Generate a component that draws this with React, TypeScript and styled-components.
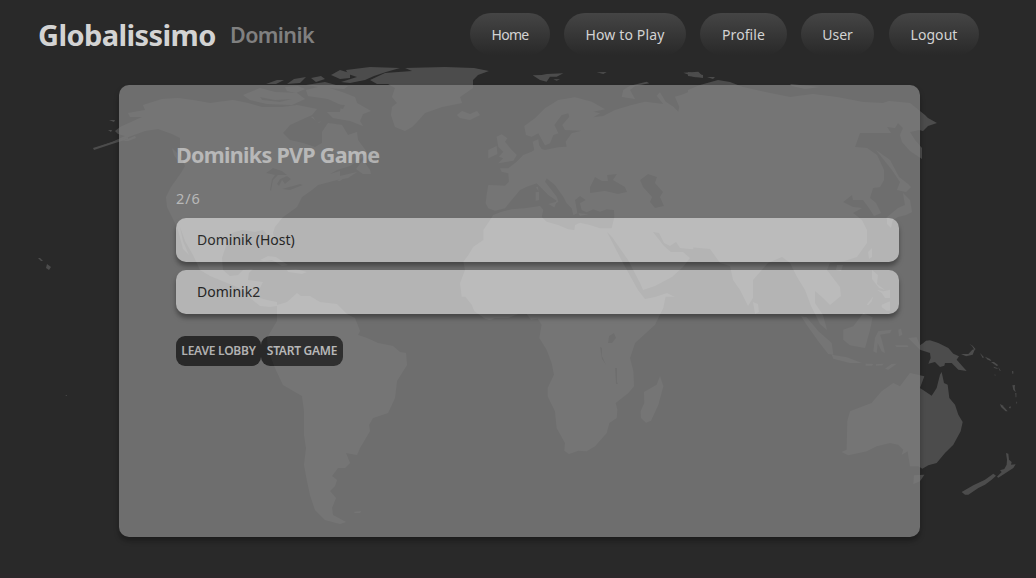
import React from "react";
import styled, { createGlobalStyle } from "styled-components";

const GlobalStyle = createGlobalStyle`
  * { box-sizing: border-box; }
  html, body { margin: 0; height: 100%; }
  body {
    background: #292929;
    color: lightgray;
    font-family: "Noto Sans", "Open Sans", sans-serif;
    font-size: 14px;
    font-weight: 400;
    overflow: hidden;
  }
`;

const Page = styled.div`
  position: relative;
  height: 578px;
  display: flex;
  flex-direction: column;
  overflow: hidden;
`;

const MapArt = styled.svg`
  position: absolute;
  inset: 0;
  width: 1036px;
  height: 578px;
`;

const Header = styled.header`
  position: relative;
  flex: none;
  height: 85px;
  padding: 13px 57px 0 38px;
  display: flex;
  justify-content: space-between;
  align-items: flex-start;
`;

const Brand = styled.div`
  display: flex;
  align-items: flex-start;
  gap: 14px;
  height: 42px;
  line-height: 44px;
  white-space: nowrap;
`;

const Title = styled.h1`
  margin: 0;
  width: 178px;
  font-size: 29px;
  font-weight: 700;
  letter-spacing: -0.6px;
`;

const PlayerName = styled.h2`
  margin: 0;
  font-size: 21.5px;
  font-weight: 600;
  color: #808080;
  letter-spacing: -0.6px;
`;

const Nav = styled.nav`
  display: flex;
  gap: 14px;
`;

const NavLink = styled.a<{ $width: number; $tracking: number }>`
  width: ${(p) => p.$width}px;
  height: 42px;
  border-radius: 21px;
  background: linear-gradient(#454545, #292929);
  display: flex;
  justify-content: center;
  line-height: 44px;
  letter-spacing: ${(p) => p.$tracking}px;
  white-space: nowrap;

  &:last-child { margin-left: 1px; }
`;

const Lobby = styled.main`
  position: relative;
  flex: none;
  width: 801px;
  height: 452px;
  margin-left: 119px;
  padding: 55px 21px 0 57px;
  border-radius: 10px;
  background: gray;
  opacity: 0.8;
  box-shadow: 0 4px 5px rgba(0, 0, 0, 0.35);
`;

const LobbyTitle = styled.h2`
  margin: 0;
  font-size: 21.5px;
  line-height: 30px;
  font-weight: 700;
  letter-spacing: -0.7px;
`;

const Count = styled.p`
  margin: 18px 0 10px;
  font-size: 14.5px;
  line-height: 20px;
  letter-spacing: 0.9px;
`;

const Player = styled.div`
  height: 44px;
  margin-bottom: 8px;
  padding-left: 21px;
  border-radius: 10px;
  background: #d7d7d7;
  color: #242424;
  line-height: 44px;
  box-shadow: 0 4px 5px rgba(0, 0, 0, 0.4);
`;

const Actions = styled.div`
  display: flex;
  margin-top: 22px;
`;

const Button = styled.button<{ $width: number }>`
  width: ${(p) => p.$width}px;
  height: 30px;
  padding: 0 0 1px;
  border: 0;
  border-radius: 9px;
  background: #292929;
  color: lightgray;
  font-family: inherit;
  font-size: 12px;
  font-weight: 600;
  letter-spacing: -0.25px;
  white-space: nowrap;
`;

const Footer = styled.footer`
  position: relative;
  flex: none;
  height: 4px;
  margin-top: auto;
  background: #2b282a;
`;

const land = "#4c4c4c";
const sea = "#292929";

const americas = [
  "93,149 112,142 125,136 118,134 115,131 120,127 142,117 130,117 128,113 145,110 143,105 162,99 178,98 193,100 210,103 233,100 248,103 262,107 283,107 297,105 317,109 312,115 303,119 290,125 283,133 290,140 303,143 315,147 322,143 322,132 328,123 342,125 348,135 357,132 358,140 367,152 363,157 350,166 337,170 330,174 340,171 340,176 357,172 348,178 337,180 318,185 312,190 302,197 297,207 283,217 275,227 273,233 276,245 273,247 270,238 263,230 255,232 242,230 232,233 227,243 222,258 223,270 230,276 238,275 243,270 253,269 249,273 248,280 263,282 260,288 260,298 267,300 277,302 277,306 270,307 260,306 250,298 245,292 237,287 227,283 210,276 200,270 193,255 185,241 180,227 183,241 189,255 183,249 177,227 172,217 167,207 166,197 171,187 181,173 185,166 180,155 180,138 172,134 158,129 145,131 120,140",
  "277,305 287,302 297,293 301,296 310,296 320,302 337,304 347,314 355,318 360,331 358,335 367,338 378,343 393,346 400,352 406,353 407,365 397,381 395,398 388,413 373,418 369,425 370,431 360,448 357,455 346,453 350,463 345,468 338,468 332,476 337,480 335,486 330,491 336,498 332,508 333,515 346,522 340,524 325,520 315,510 310,495 307,481 304,465 306,448 304,435 304,411 302,396 283,385 275,368 268,350 267,338 277,321",
  "243,95 260,88 275,92 297,93 305,99 292,105 267,104 250,100",
  "306,90 318,87 326,87 342,92 355,97 357,103 371,111 363,114 360,121 363,126 350,121 333,118 327,112 340,112 341,105 328,99 308,96",
  "311,117 318,115 323,119 319,123",
  "331,75 340,70 350,73 350,78 340,79",
  "346,70 370,67 400,68 386,72 374,76 365,80 350,83 341,82 357,77 348,74",
  "266,84 277,80 284,80 276,84",
  "287,84 294,79 306,77 300,83",
  "311,78 321,76 325,79 316,82",
  "306,85 325,82 336,85 348,86 344,89 325,88",
  "285,87 298,86 305,89 296,93 287,91",
  "370,80 385,73 412,71 405,68 445,67 474,68 489,71 478,75 473,80 473,88 460,97 462,103 442,107 425,113 417,122 412,127 405,131 395,127 391,115 392,107 397,103 392,97 395,88 388,84 377,84",
  "457,115 462,111 470,114 477,111 480,115 470,120 460,118",
  "356,169 363,160 370,170 371,174 363,174",
  "337,181 343,177 348,175 340,181",
  "260,260 268,256 276,257 288,265 282,266 272,260 264,261",
  "287,270 296,269 307,272 302,274 288,272",
  "47,264 51,267 49,270 46,268",
  "38,258 40,258 43,261 41,261",
  "109,120 115,120 114,122",
  "108,130 112,130 111,132",
  "93,148 112,142 128,137 128,139 112,144 94,150",
  "123,141 135,136 136,138 128,141",
  "172,148 177,153 178,161 174,155",
  "354,512 361,511 360,513 355,513",
  "65,395 67,395 67,396",
];

const eurasia = [
  "1045,270 1015,283 990,290 1003,320 1000,335 985,320 962,305 945,277 935,287 955,312 900,305 860,315 810,330 775,348 745,352 765,340 745,335 780,328 740,305 690,292 640,300 600,325 570,355 538,378 543,405 560,410 580,400 600,436 615,430 625,405 640,400 628,375 650,345 670,340 673,350 652,375 660,390 710,392 680,400 662,425 665,440 640,442 600,450 590,447 582,435 580,418 563,425 568,450 560,455 535,465 515,485 490,505 465,505 470,515 490,520 492,545 480,557 430,555 425,585 422,610 430,625 450,632 480,625 500,600 525,570 545,560 575,550 590,565 610,585 635,602 625,615 640,605 635,590 600,545 605,535 630,555 655,590 665,610 680,625 685,645 697,640 690,600 705,588 722,600 705,610 710,630 725,637 745,628 765,635 785,628 807,630 808,650 800,685 765,685 735,675 705,668 690,675 688,690 670,688 640,675 605,665 590,650 595,630 585,618 540,625 500,628 470,635 445,645 435,660 415,690 415,720 385,740 370,765 355,785 360,810 345,850 350,890 1045,890",
  "455,410 470,403 487,415 480,425 500,450 515,465 505,482 460,490 475,475 462,470 475,455 460,440",
  "430,450 455,438 457,462 430,475",
  "610,612 635,605 628,622",
  "572,577 582,575 582,600 572,602",
  "573,562 579,560 580,573",
  "700,640 730,643 705,647",
  "563,226 590,225 605,222 655,220 635,230 615,230 605,245 585,240",
  "625,238 645,238 635,242",
  "755,217 785,216 775,222",
  "830,290 835,270 855,257 905,245 913,250 870,258 855,270 870,297 845,293",
  "1015,218 1060,215 1075,230 1050,232",
];

const asia = [
  "688,90 700,85 718,80 730,82 743,87 770,93 790,97 813,94 837,97 863,102 883,103 889,101 910,103 925,115 928,118 937,123 928,126 923,131 919,130 910,132 915,140 922,148 922,159 910,151 902,142 900,135 903,128 898,123 895,128 887,127 891,133 860,133 855,147 867,148 877,155 884,170 884,180 880,187 873,188 870,198 876,203 881,213 874,216 869,208 863,200 853,200 852,195 843,202 853,207 862,208 853,213 862,220 867,230 867,243 857,257 845,261 830,263 827,270 840,287 841,296 830,305 823,298 815,291 815,303 823,315 827,330 820,324 811,306 805,290 797,277 790,263 782,257 768,263 753,280 753,298 748,306 740,290 733,280 730,266 720,263 710,249 688,247",
  "688,72 703,75 703,78 688,76",
  "707,77 715,77 713,79",
  "790,84 820,87 805,89 792,86",
  "876,150 890,160 899,177 908,184 911,187 906,192 897,190 900,182 892,170",
  "903,193 910,200 912,212 906,215 898,217 890,222 886,218 898,208 905,205",
  "887,219 893,219 891,228 887,224",
  "868,252 872,248 872,257 869,259",
  "872,270 878,275 877,284 885,290 879,288 872,279",
  "837,265 843,265 841,271 836,270",
  "753,302 758,304 759,312 755,314",
];

const oceania = [
  "333,85 350,88 385,130 425,165 430,200 415,198 385,160 350,110",
  "425,200 470,208 515,225 480,225 430,212",
  "527,227 550,228 545,233 527,233",
  "558,229 580,227 578,232 558,233",
  "585,242 605,228 620,227 595,245",
  "460,125 490,115 520,75 548,88 540,125 525,180 480,172 460,155",
  "555,150 565,130 605,125 600,135 570,140 575,155 585,195 575,190 563,165 560,195 550,190",
  "625,125 633,122 637,140 627,145",
  "615,172 652,172 655,177 620,177",
  "530,50 550,25 545,40 535,52",
  "560,5 580,10 600,5 600,30 585,30 575,15",
  "575,50 600,40 600,68 590,68 575,58",
  "655,150 680,148 690,172 700,165 708,158 720,157 745,165 775,180 790,197 807,205 800,215 830,249 805,245 785,225 765,225 763,233 750,237 735,222 715,227 722,210 720,195 690,185 670,165",
  "813,198 835,198 847,185 855,183 848,200 828,205",
  "837,167 848,173 857,184 853,185 846,174",
  "870,195 882,208 878,210",
  "885,206 900,213 905,220 893,215",
  "903,222 912,222 925,232 920,234",
  "910,236 922,240 923,243 913,240",
  "925,237 933,250 928,247",
  "912,260 917,260 916,263",
  "930,348 937,352 953,370 947,370 933,357",
  "967,292 975,291 974,300 977,313 970,305",
  "966,249 970,250 970,257 967,257",
  "957,357 962,355 962,361 958,361",
  "976,315 979,315 979,328 977,328",
  "979,340 982,345 979,347",
  "455,492 470,485 472,400 480,370 545,345 575,310 610,285 630,295 660,255 703,265 690,300 725,323 740,300 750,260 755,252 762,285 773,290 778,330 795,350 805,380 818,402 812,430 790,470 765,495 740,525 715,532 697,542 685,535 660,535 653,490 635,500 640,485 625,470 600,465 560,475 530,490 475,502",
  "672,562 703,560 690,580 670,588",
  "948,495 955,497 957,515 965,522 963,530 977,529 970,540 955,550 925,569 921,566 935,552 930,547 943,543 950,530 951,515",
  "910,557 918,563 905,575 885,590 865,600 835,620 825,620 815,612 850,592 885,575",
];

const africa = [
  "350,-10 352,15 380,50 388,70 420,92 435,97 450,90 490,90 520,78 545,78 558,95 578,92 590,110 583,150 605,185 620,225 627,260 608,300 608,325 630,370 635,420 660,465 658,488 672,498 700,488 725,490 750,475 785,435 793,405 815,390 817,365 812,345 850,315 867,295 865,250 855,210 870,165 930,110 955,60 965,10 965,-10",
  "945,265 955,295 940,350 918,398 903,404 888,390 887,370 898,345 897,312 935,290",
];

const seas = [
  "595,177 590,187 590,193 605,191 618,194 627,192 625,187 613,180 617,174 607,175 608,181 602,181",
  "640,180 648,174 657,177 655,183 663,192 660,197 664,206 655,208 650,202 652,197 643,187",
  "607,232 612,237 628,260 640,283 643,290 655,286 672,277 683,267 690,258 683,252 677,252 671,252 664,246 653,232 659,233 664,243 670,246 676,242 680,248 689,249 708,250 691,305 667,293 655,297 645,299 638,290 623,263",
  "609,336 614,333 616,338 612,343 608,343",
  "600,347 602,348 602,356 606,365 602,359",
  "615,368 617,368 617,382 618,384 616,384",
  "266,173 273,168 282,171 287,175 278,175 273,180 271,191 270,190 272,179 275,175",
  "280,179 287,176 291,179 285,184 282,180 279,186 277,184",
  "282,189 300,184 303,185 290,190",
  "312,115 323,113 326,119 317,123",
  "260,97 275,100 292,99 280,102 262,100",
  "330,104 345,105 343,109 333,107",
];

function Shapes({ points, transform, fill = land }: { points: string[]; transform?: string; fill?: string }) {
  return (
    <g transform={transform} fill={fill}>
      {points.map((p) => (
        <polygon key={p} points={p} />
      ))}
    </g>
  );
}

function WorldMap() {
  return (
    <MapArt viewBox="0 0 1036 578" aria-hidden="true">
      <Shapes points={americas} />
      <Shapes points={eurasia} transform="translate(345 0) scale(0.33333)" />
      <Shapes points={asia} />
      <Shapes points={africa} transform="translate(345 288) scale(0.33333)" />
      <Shapes points={oceania} transform="translate(690 288) scale(0.33333)" />
      <Shapes points={seas} fill={sea} />
    </MapArt>
  );
}

const links = [
  { label: "Home", width: 80, tracking: -0.7 },
  { label: "How to Play", width: 122, tracking: 0.15 },
  { label: "Profile", width: 87, tracking: 0.1 },
  { label: "User", width: 73, tracking: 0 },
  { label: "Logout", width: 90, tracking: 0.05 },
];

const players = ["Dominik (Host)", "Dominik2"];

export default function App() {
  return (
    <Page>
      <GlobalStyle />
      <WorldMap />
      <Header>
        <Brand>
          <Title>Globalissimo</Title>
          <PlayerName>Dominik</PlayerName>
        </Brand>
        <Nav>
          {links.map((l) => (
            <NavLink key={l.label} $width={l.width} $tracking={l.tracking}>
              {l.label}
            </NavLink>
          ))}
        </Nav>
      </Header>
      <Lobby>
        <LobbyTitle>Dominiks PVP Game</LobbyTitle>
        <Count>2/6</Count>
        {players.map((p) => (
          <Player key={p}>{p}</Player>
        ))}
        <Actions>
          <Button $width={85}>LEAVE LOBBY</Button>
          <Button $width={82}>START GAME</Button>
        </Actions>
      </Lobby>
      <Footer />
    </Page>
  );
}
